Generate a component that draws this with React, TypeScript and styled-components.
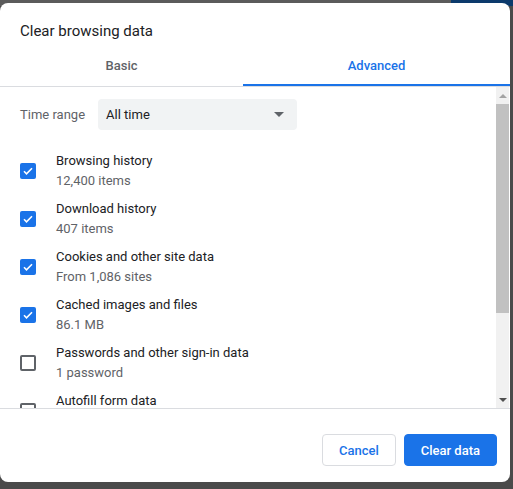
import React from 'react';
import styled, { createGlobalStyle } from 'styled-components';

const GlobalStyle = createGlobalStyle`
	html, body {
		margin: 0;
		padding: 0;
	}
	body {
		width: 513px;
		height: 489px;
		overflow: hidden;
		background:
			linear-gradient(90deg, #5b5b5b 0 88%, #0c3a6c 88% 100%) top / 100% 6px no-repeat,
			#4a4a4a;
		font-family: Roboto, 'Liberation Sans', sans-serif;
		-webkit-font-smoothing: antialiased;
	}
`;

const Dialog = styled.div`
	margin-top: 3px;
	width: 510px;
	height: 479px;
	background: #fff;
	border-radius: 8px;
	display: flex;
	flex-direction: column;
	overflow: hidden;
`;

const Title = styled.h1`
	margin: 0;
	padding: 17px 20px 0;
	font-size: 15px;
	font-weight: 400;
	line-height: 22px;
	color: #202124;
`;

const Tabs = styled.div`
	display: flex;
	height: 44px;
	border-bottom: 1px solid #dadce0;
`;

const Tab = styled.div<{ $active?: boolean; $width?: number }>`
	flex: ${(p) => (p.$width ? `0 0 ${p.$width}px` : '1')};
	display: flex;
	align-items: center;
	justify-content: center;
	padding-top: 3px;
	font-size: 13px;
	font-weight: 500;
	color: ${(p) => (p.$active ? '#1a73e8' : '#5f6368')};
	box-shadow: ${(p) => (p.$active ? 'inset 0 -2px 0 #1a73e8' : 'none')};
`;

const Body = styled.div`
	display: flex;
	height: 321px;
`;

const Content = styled.div`
	flex: 1;
	overflow: hidden;
	padding: 12px 0 0 20px;
`;

const RangeRow = styled.div`
	display: flex;
	align-items: center;
	margin-bottom: 16px;
`;

const Label = styled.span`
	font-size: 13px;
	color: #5f6368;
	margin-right: 13px;
`;

const Select = styled.div`
	width: 199px;
	height: 31px;
	box-sizing: border-box;
	padding: 0 8px;
	display: flex;
	align-items: center;
	justify-content: space-between;
	background: #f1f3f4;
	border-radius: 4px;
	font-size: 13px;
	color: #202124;
`;

const Caret = styled.span`
	width: 0;
	height: 0;
	margin-right: 5px;
	border-left: 5px solid transparent;
	border-right: 5px solid transparent;
	border-top: 5px solid #5f6368;
`;

const Item = styled.div`
	display: flex;
	align-items: flex-start;
	height: 48px;
	box-sizing: border-box;
	padding-top: 5px;
`;

const Box = styled.span<{ $checked?: boolean }>`
	flex: 0 0 auto;
	width: 16px;
	height: 16px;
	box-sizing: border-box;
	border-radius: 2px;
	margin: 12px 20px 0 0;
	display: flex;
	align-items: center;
	justify-content: center;
	background: ${(p) => (p.$checked ? '#1a73e8' : '#fff')};
	border: ${(p) => (p.$checked ? 'none' : '2px solid #5f6368')};
`;

const Text = styled.div`
	display: flex;
	flex-direction: column;
	font-size: 13px;
	line-height: 20px;
`;

const Main = styled.span`
	color: #202124;
`;

const Sub = styled.span`
	color: #5f6368;
`;

const Scrollbar = styled.div`
	flex: 0 0 13px;
	margin-right: 1px;
	background: #f1f1f1;
	display: flex;
	flex-direction: column;
`;

const Arrow = styled.div<{ $down?: boolean }>`
	height: 17px;
	display: flex;
	align-items: center;
	justify-content: center;

	&::after {
		content: '';
		width: 0;
		height: 0;
		border-left: 4px solid transparent;
		border-right: 4px solid transparent;
		${(p) =>
			p.$down
				? 'border-top: 4px solid #505050;'
				: 'border-bottom: 4px solid #a3a3a3;'}
	}
`;

const Track = styled.div`
	flex: 1;
`;

const Thumb = styled.div`
	height: 209px;
	background: #c1c1c1;
`;

const Footer = styled.div`
	flex: 1;
	border-top: 1px solid #dadce0;
	display: flex;
	justify-content: flex-end;
	align-items: flex-start;
	gap: 8px;
	padding: 25px 13px 0 0;
`;

const Button = styled.button<{ $primary?: boolean }>`
	height: 32px;
	padding: 0 16px;
	border-radius: 4px;
	font-family: inherit;
	font-size: 13px;
	font-weight: 500;
	cursor: pointer;
	border: 1px solid ${(p) => (p.$primary ? '#1a73e8' : '#dadce0')};
	background: ${(p) => (p.$primary ? '#1a73e8' : '#fff')};
	color: ${(p) => (p.$primary ? '#fff' : '#1a73e8')};
`;

const items = [
	{ name: 'Browsing history', info: '12,400 items', checked: true },
	{ name: 'Download history', info: '407 items', checked: true },
	{ name: 'Cookies and other site data', info: 'From 1,086 sites', checked: true },
	{ name: 'Cached images and files', info: '86.1 MB', checked: true },
	{ name: 'Passwords and other sign-in data', info: '1 password', checked: false },
	{ name: 'Autofill form data', checked: false },
];

const Check = () => (
	<svg width="12" height="12" viewBox="0 0 24 24">
		<path
			d="M4 12.5l5 5L20 6.5"
			fill="none"
			stroke="#fff"
			strokeWidth="3.2"
		/>
	</svg>
);

const App: React.FC = () => (
	<>
		<GlobalStyle />
		<Dialog>
			<Title>Clear browsing data</Title>
			<Tabs>
				<Tab $width={243}>Basic</Tab>
				<Tab $active>Advanced</Tab>
			</Tabs>
			<Body>
				<Content>
					<RangeRow>
						<Label>Time range</Label>
						<Select>
							All time
							<Caret />
						</Select>
					</RangeRow>
					{items.map((item) => (
						<Item key={item.name}>
							<Box $checked={item.checked}>{item.checked && <Check />}</Box>
							<Text>
								<Main>{item.name}</Main>
								{item.info && <Sub>{item.info}</Sub>}
							</Text>
						</Item>
					))}
				</Content>
				<Scrollbar>
					<Arrow />
					<Track>
						<Thumb />
					</Track>
					<Arrow $down />
				</Scrollbar>
			</Body>
			<Footer>
				<Button>Cancel</Button>
				<Button $primary>Clear data</Button>
			</Footer>
		</Dialog>
	</>
);

export default App;
